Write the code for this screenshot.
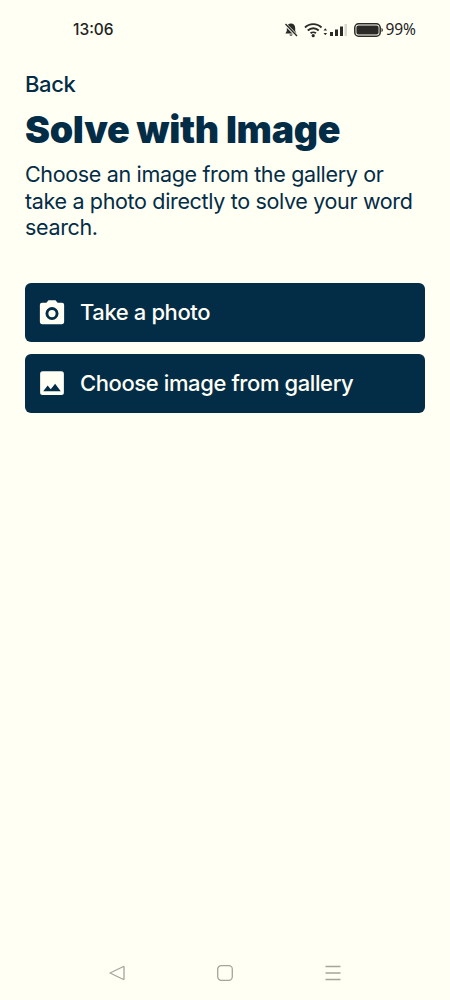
<div class="page">
  <header class="status">
    <span class="time">13:06</span>
    <div class="status-right">
      <svg class="ic-bell" viewBox="0 0 16 16" width="16" height="16" aria-hidden="true">
        <path d="M8 1.500c-2.600 0-4.200 2-4.200 4.400v3L2.400 11.400h11.200L12.200 8.900V5.900C12.200 3.500 10.600 1.500 8 1.500z" fill="#2a2a26"/>
        <path d="M6.300 12.600a1.800 1.800 0 0 0 3.400 0z" fill="#2a2a26"/>
        <path d="M2 2l12 12" stroke="#fffff4" stroke-width="3"/>
        <path d="M2.500 2l11.500 12" stroke="#2a2a26" stroke-width="1.400"/>
      </svg>
      <svg class="ic-wifi" viewBox="0 0 24 16" width="24" height="16" aria-hidden="true">
        <path d="M1 5.500C5.500 1 13 1 17.500 5.500M3.800 8.500C7 5.400 11.500 5.400 14.700 8.500M6.600 11.300C8 10 10.500 10 11.900 11.300" fill="none" stroke="#2a2a26" stroke-width="1.900"/>
        <circle cx="9.200" cy="13.700" r="1.600" fill="#2a2a26"/>
        <path d="M19.500 8.500l1.800-2.200 1.800 2.200zM19.500 11l1.800 2.200 1.800-2.200z" fill="#2a2a26"/>
      </svg>
      <svg class="ic-signal" viewBox="0 0 18 14" width="18" height="14" aria-hidden="true">
        <rect x="1" y="9" width="3" height="4" fill="#2a2a26"/>
        <rect x="6" y="6.500" width="3" height="6.500" fill="#2a2a26"/>
        <rect x="11" y="3.500" width="3" height="9.500" fill="#2a2a26"/>
        <rect x="15.500" y="1" width="2.500" height="12" fill="#d8d8d0"/>
      </svg>
      <svg class="ic-batt" viewBox="0 0 29 14" width="29" height="14" aria-hidden="true">
        <rect x="0.800" y="0.800" width="25.400" height="12.400" rx="3.800" fill="none" stroke="#2a2a26" stroke-width="1.500"/>
        <rect x="2.400" y="2.400" width="22.200" height="9.200" rx="2" fill="#2a2a26"/>
        <path d="M27.500 5v4c.9-.3 1.300-1 1.300-2s-.4-1.700-1.300-2z" fill="#2a2a26"/>
      </svg>
      <span class="pct">99%</span>
    </div>
  </header>

  <main class="content">
    <a class="back" href="#back">Back</a>
    <h1>Solve with Image</h1>
    <p>Choose an image from the gallery or take a photo directly to solve your word search.</p>

    <div class="actions">
      <button type="button">
        <svg viewBox="0 0 24 24" width="30" height="30" aria-hidden="true">
          <path fill-rule="evenodd" fill="#fffff4" d="M9.200 2.500 7.500 4.500H4a1.700 1.700 0 0 0-1.700 1.700V20A1.700 1.700 0 0 0 4 21.700h16a1.700 1.700 0 0 0 1.700-1.700V6.200A1.700 1.700 0 0 0 20 4.500h-3.500l-1.700-2zM12 8a5.200 5.200 0 1 1 0 10.400A5.200 5.200 0 0 1 12 8zm0 2.300a2.900 2.900 0 1 0 0 5.800 2.900 2.900 0 0 0 0-5.800z"/>
        </svg>
        <span>Take a photo</span>
      </button>
      <button type="button">
        <svg viewBox="0 0 24 24" width="30" height="30" aria-hidden="true">
          <path fill-rule="evenodd" fill="#fffff4" d="M4.500 2.500h15a2 2 0 0 1 2 2v15a2 2 0 0 1-2 2h-15a2 2 0 0 1-2-2v-15a2 2 0 0 1 2-2zM5 18.500h14l-4.500-6-3.500 4.500-2.500-3z"/>
        </svg>
        <span>Choose image from gallery</span>
      </button>
    </div>
  </main>

  <nav class="sysnav" aria-label="System navigation">
    <svg viewBox="0 0 18 18" width="18" height="18" aria-hidden="true">
      <path d="M2 9 15.500 2.500c.3 0 .5.200.5.500v12c0 .3-.2.500-.5.500z" fill="none" stroke="#a5a59c" stroke-width="1.300" stroke-linejoin="round"/>
    </svg>
    <svg viewBox="0 0 18 18" width="18" height="18" aria-hidden="true">
      <rect x="1.700" y="1.700" width="14.600" height="14.600" rx="3.500" fill="none" stroke="#a5a59c" stroke-width="1.300"/>
    </svg>
    <svg viewBox="0 0 18 18" width="18" height="18" aria-hidden="true">
      <path d="M1.500 2.500h15M1.500 9h15M1.500 15.500h15" stroke="#a5a59c" stroke-width="1.300"/>
    </svg>
  </nav>
</div>

<style>
  :global(body) {
    margin: 0;
    background: #fffff4;
  }
  .page {
    height: 1000px;
    display: flex;
    flex-direction: column;
    background: #fffff4;
    color: #032c47;
    font-family: Inter, "Noto Sans", sans-serif;
    overflow: hidden;
  }
  .status {
    height: 58px;
    box-sizing: border-box;
    padding: 20px 34px 0 73px;
    display: flex;
    justify-content: space-between;
    align-items: flex-start;
    color: #22221e;
  }
  .time {
    font-size: 15.500px;
    font-weight: 500;
    line-height: 19px;
  }
  .status-right {
    display: flex;
    align-items: center;
    height: 19px;
  }
  .ic-bell { margin-right: 5px; }
  .ic-wifi { margin-right: 1px; }
  .ic-signal { margin-right: 7px; }
  .ic-batt { margin-right: 2px; }
  .pct {
    font-family: "Noto Sans", sans-serif;
    font-size: 15.500px;
    line-height: 19px;
  }
  .content {
    flex: 1;
    padding: 12px 25px 0;
    display: flex;
    flex-direction: column;
    align-items: stretch;
  }
  .back {
    color: inherit;
    text-decoration: none;
    font-size: 22px;
    font-weight: 500;
    letter-spacing: -0.4px;
    line-height: 28px;
    align-self: flex-start;
  }
  h1 {
    margin: 8px 0 0;
    font-size: 37.500px;
    line-height: 48px;
    font-weight: 900;
    letter-spacing: -0.3px;
  }
  p {
    margin: 7px 0 0;
    font-size: 21.500px;
    line-height: 26.500px;
    letter-spacing: -0.34px;
  }
  .actions {
    margin-top: 42px;
    display: flex;
    flex-direction: column;
    gap: 12px;
  }
  button {
    height: 59px;
    border: 0;
    border-radius: 6px;
    background: #032c47;
    color: #fffff4;
    padding: 0 0 0 12px;
    display: flex;
    align-items: center;
    gap: 13px;
    font: 500 22px Inter, "Noto Sans", sans-serif;
    letter-spacing: -0.4px;
    text-align: left;
  }
  .sysnav {
    height: 42px;
    box-sizing: border-box;
    padding: 6px 108px 0;
    display: flex;
    justify-content: space-between;
    align-items: flex-start;
  }
</style>
